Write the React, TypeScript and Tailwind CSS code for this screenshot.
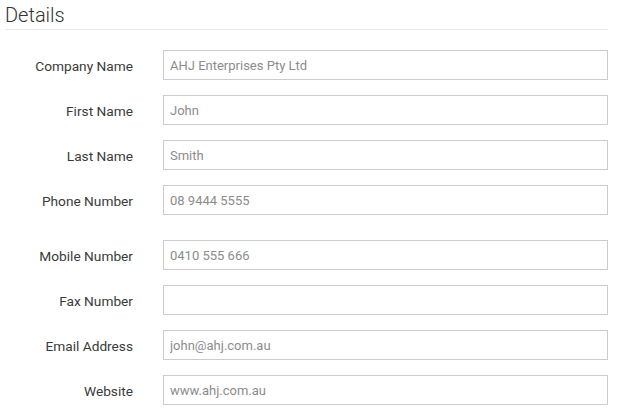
const fields: { label: string; value: string; gap?: boolean }[] = [
  { label: 'Company Name', value: 'AHJ Enterprises Pty Ltd' },
  { label: 'First Name', value: 'John' },
  { label: 'Last Name', value: 'Smith' },
  { label: 'Phone Number', value: '08 9444 5555' },
  { label: 'Mobile Number', value: '0410 555 666', gap: true },
  { label: 'Fax Number', value: '' },
  { label: 'Email Address', value: 'john@ahj.com.au' },
  { label: 'Website', value: 'www.ahj.com.au' },
];

export default function App() {
  return (
    <div className="bg-white w-[618px] h-[410px] px-[5px] font-['Roboto',sans-serif]">
      <h1 className="w-[603px] text-[20px] leading-[24px] font-light text-[#333] pt-[3px] pb-[2px] border-b border-[#e8e8e8]">
        Details
      </h1>
      <div className="flex flex-col pt-[20px]">
        {fields.map((f) => (
          <div key={f.label} className={`flex items-center gap-[30px] ${f.gap ? 'mt-[25px]' : 'mt-[15px] first:mt-0'}`}>
            <label className="w-[128px] pt-[3px] text-right text-[13.7px] text-[#3a3a3a]">{f.label}</label>
            <input
              readOnly
              defaultValue={f.value}
              className="w-[445px] h-[30px] border border-[#cccccc] px-[6px] pt-[1px] text-[13px] text-[#8c8c8c] outline-none"
            />
          </div>
        ))}
      </div>
    </div>
  );
}
